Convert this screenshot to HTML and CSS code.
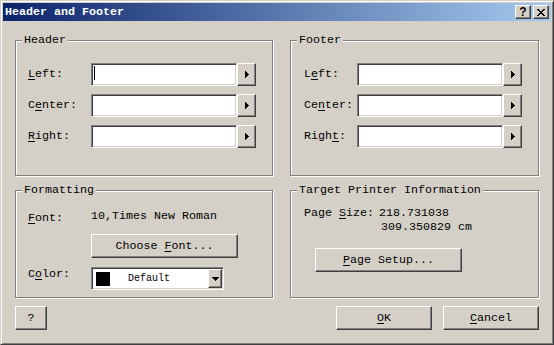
FILE: index.html
```html
<!DOCTYPE html>
<html lang="en">

<head>
  <meta charset="UTF-8">
  <title>Header and Footer</title>
  <link rel="stylesheet" href="styles.css">
</head>

<body>
  <div class="window">
    <div class="titlebar">
      <span class="title">Header and Footer</span>
      <div class="caption-btns">
        <span class="cap-btn cap-help">?</span>
        <span class="cap-btn">
          <svg width="8" height="7" viewBox="0 0 8 7" shape-rendering="crispEdges">
            <path d="M0 0h2v1h-2zM6 0h2v1h-2zM1 1h2v1h-2zM5 1h2v1h-2zM2 2h4v1h-4zM3 3h2v1h-2zM2 4h4v1h-4zM1 5h2v1h-2zM5 5h2v1h-2zM0 6h2v1h-2zM6 6h2v1h-2z" fill="#000"/>
          </svg>
        </span>
      </div>
    </div>

    <div class="client">
      <div class="groups">
        <div class="group">
          <span class="legend">Header</span>
          <div class="rows rows-header">
            <label><u>L</u>eft:</label>
            <div class="edit">
              <div class="input"><span class="caret"></span></div>
              <span class="arrow-btn">
                <svg width="4" height="7" viewBox="0 0 4 7" shape-rendering="crispEdges"><path d="M0 0h1v7h-1zM1 1h1v5h-1zM2 2h1v3h-1zM3 3h1v1h-1z"/></svg>
              </span>
            </div>
            <label>C<u>e</u>nter:</label>
            <div class="edit">
              <div class="input"></div>
              <span class="arrow-btn">
                <svg width="4" height="7" viewBox="0 0 4 7" shape-rendering="crispEdges"><path d="M0 0h1v7h-1zM1 1h1v5h-1zM2 2h1v3h-1zM3 3h1v1h-1z"/></svg>
              </span>
            </div>
            <label><u>R</u>ight:</label>
            <div class="edit">
              <div class="input"></div>
              <span class="arrow-btn">
                <svg width="4" height="7" viewBox="0 0 4 7" shape-rendering="crispEdges"><path d="M0 0h1v7h-1zM1 1h1v5h-1zM2 2h1v3h-1zM3 3h1v1h-1z"/></svg>
              </span>
            </div>
          </div>
        </div>

        <div class="group">
          <span class="legend">Footer</span>
          <div class="rows rows-footer">
            <label>L<u>e</u>ft:</label>
            <div class="edit">
              <div class="input"></div>
              <span class="arrow-btn">
                <svg width="4" height="7" viewBox="0 0 4 7" shape-rendering="crispEdges"><path d="M0 0h1v7h-1zM1 1h1v5h-1zM2 2h1v3h-1zM3 3h1v1h-1z"/></svg>
              </span>
            </div>
            <label>Ce<u>n</u>ter:</label>
            <div class="edit">
              <div class="input"></div>
              <span class="arrow-btn">
                <svg width="4" height="7" viewBox="0 0 4 7" shape-rendering="crispEdges"><path d="M0 0h1v7h-1zM1 1h1v5h-1zM2 2h1v3h-1zM3 3h1v1h-1z"/></svg>
              </span>
            </div>
            <label>Righ<u>t</u>:</label>
            <div class="edit">
              <div class="input"></div>
              <span class="arrow-btn">
                <svg width="4" height="7" viewBox="0 0 4 7" shape-rendering="crispEdges"><path d="M0 0h1v7h-1zM1 1h1v5h-1zM2 2h1v3h-1zM3 3h1v1h-1z"/></svg>
              </span>
            </div>
          </div>
        </div>

        <div class="group">
          <span class="legend">Formatting</span>
          <div class="fmt">
            <label class="font-label"><u>F</u>ont:</label>
            <span class="font-value">10,Times New Roman</span>
            <span></span>
            <button class="btn btn-wide">Choose <u>F</u>ont...</button>
            <label>C<u>o</u>lor:</label>
            <div class="combo">
              <span class="swatch"></span>
              <span class="combo-text">Default</span>
              <span class="combo-btn">
                <svg width="7" height="4" viewBox="0 0 7 4" shape-rendering="crispEdges"><path d="M0 0h7v1h-7zM1 1h5v1h-5zM2 2h3v1h-3zM3 3h1v1h-1z"/></svg>
              </span>
            </div>
          </div>
        </div>

        <div class="group">
          <span class="legend">Target Printer Information</span>
          <div class="target">
            <div class="size-row">
              <label class="size-label">Page <u>S</u>ize:</label>
              <div class="size-value">
                <div>218.731038</div>
                <div class="size-second">309.350829 cm</div>
              </div>
            </div>
            <button class="btn btn-wide btn-setup"><u>P</u>age Setup...</button>
          </div>
        </div>
      </div>

      <div class="actions">
        <button class="btn btn-help">?</button>
        <div class="actions-right">
          <button class="btn btn-main"><u>O</u>K</button>
          <button class="btn btn-main"><u>C</u>ancel</button>
        </div>
      </div>
    </div>
  </div>
</body>

</html>
```

FILE: styles.css
```css
* {
  padding: 0;
  margin: 0;
  box-sizing: border-box;
}

body {
  width: 554px;
  height: 345px;
  background: #d4d0c8;
  color: #000;
  font-family: "Liberation Mono", "DejaVu Sans Mono", monospace;
  font-size: 11.67px;
  line-height: 16px;
}

u {
  text-decoration: underline;
  text-underline-offset: 2px;
}

.window {
  width: 554px;
  height: 345px;
  padding: 2px;
  display: flex;
  flex-direction: column;
  border: 1px solid;
  border-color: #d4d0c8 #404040 #404040 #d4d0c8;
  box-shadow: inset 1px 1px 0 #fff, inset -1px -1px 0 #808080;
}

/* title bar */
.titlebar {
  height: 18px;
  margin-bottom: 1px;
  padding-left: 2px;
  display: flex;
  align-items: center;
  background: linear-gradient(to right, #0a246a, #a6caf0);
  color: #fff;
  font-weight: bold;
}

.caption-btns {
  margin-left: auto;
  margin-right: 2px;
  display: flex;
  gap: 2px;
}

.cap-btn {
  width: 16px;
  height: 14px;
  display: flex;
  align-items: center;
  justify-content: center;
  background: #d4d0c8;
  border: 1px solid;
  border-color: #fff #404040 #404040 #fff;
  box-shadow: inset -1px -1px 0 #808080;
  color: #000;
}

.cap-help {
  font-family: "Liberation Sans", Arial, sans-serif;
  font-size: 12px;
  font-weight: bold;
  line-height: 12px;
}

/* client area */
.client {
  padding: 18px 12px 0;
}

.groups {
  display: grid;
  grid-template-columns: 258px 249px;
  grid-template-rows: 136px 108px;
  column-gap: 17px;
  row-gap: 14px;
}

.group {
  position: relative;
  border: 1px solid #808080;
  box-shadow: inset 1px 1px 0 #fff, 1px 1px 0 #fff;
}

.legend {
  position: absolute;
  top: -8px;
  left: 6px;
  padding: 0 2px;
  line-height: 14px;
  background: #d4d0c8;
}

.rows {
  display: grid;
  row-gap: 8px;
  align-items: center;
  padding-top: 22px;
}

.rows label {
  padding-bottom: 2px;
}

.rows-header {
  grid-template-columns: 63px auto;
  padding-left: 12px;
}

.rows-footer {
  grid-template-columns: 53px auto;
  padding-left: 13px;
}

.edit {
  display: flex;
}

.input {
  width: 146px;
  height: 23px;
  padding: 2px 0 0 1px;
  background: #fff;
  border: 1px solid;
  border-color: #808080 #fff #fff #808080;
  box-shadow: inset 1px 1px 0 #404040, inset -1px -1px 0 #d4d0c8;
}

.caret {
  display: block;
  width: 1px;
  height: 14px;
  margin-left: 1px;
  background: #000;
}

.arrow-btn,
.combo-btn {
  display: flex;
  align-items: center;
  justify-content: center;
  background: #d4d0c8;
  border: 1px solid;
  border-color: #fff #404040 #404040 #fff;
  box-shadow: inset -1px -1px 0 #808080;
}

.arrow-btn {
  width: 19px;
  height: 23px;
}

/* buttons */
.btn {
  display: block;
  height: 24px;
  line-height: 21px;
  text-align: center;
  white-space: pre;
  font: inherit;
  color: #000;
  background: #d4d0c8;
  border: 1px solid;
  border-color: #fff #404040 #404040 #fff;
  box-shadow: inset -1px -1px 0 #808080;
}

.btn-wide {
  width: 147px;
}

/* formatting */
.fmt {
  display: grid;
  grid-template-columns: 63px auto;
  row-gap: 8px;
  align-items: start;
  padding: 17px 0 0 12px;
}

.font-label {
  padding-top: 2px;
}

.combo {
  width: 133px;
  height: 23px;
  margin-top: 1px;
  display: flex;
  align-items: center;
  background: #fff;
  border: 1px solid;
  border-color: #808080 #fff #fff #808080;
  box-shadow: inset 1px 1px 0 #404040, inset -1px -1px 0 #d4d0c8;
  padding: 1px;
}

.swatch {
  width: 14px;
  height: 14px;
  margin-left: 3px;
  background: #000;
}

.combo-text {
  margin-left: 18px;
  font-size: 10px;
}

.combo-btn {
  width: 14px;
  height: 19px;
  margin-left: auto;
}

/* target printer */
.target {
  padding: 15px 0 0 13px;
}

.size-row {
  display: flex;
  line-height: 14px;
}

.size-label {
  width: 75px;
}

.size-second {
  padding-left: 2px;
}

.btn-setup {
  margin: 14px 0 0 11px;
}

/* bottom buttons */
.actions {
  margin-top: 8px;
  display: flex;
  justify-content: space-between;
}

.actions-right {
  display: flex;
  gap: 11px;
}

.btn-help {
  width: 32px;
}

.btn-main {
  width: 96px;
}
```
